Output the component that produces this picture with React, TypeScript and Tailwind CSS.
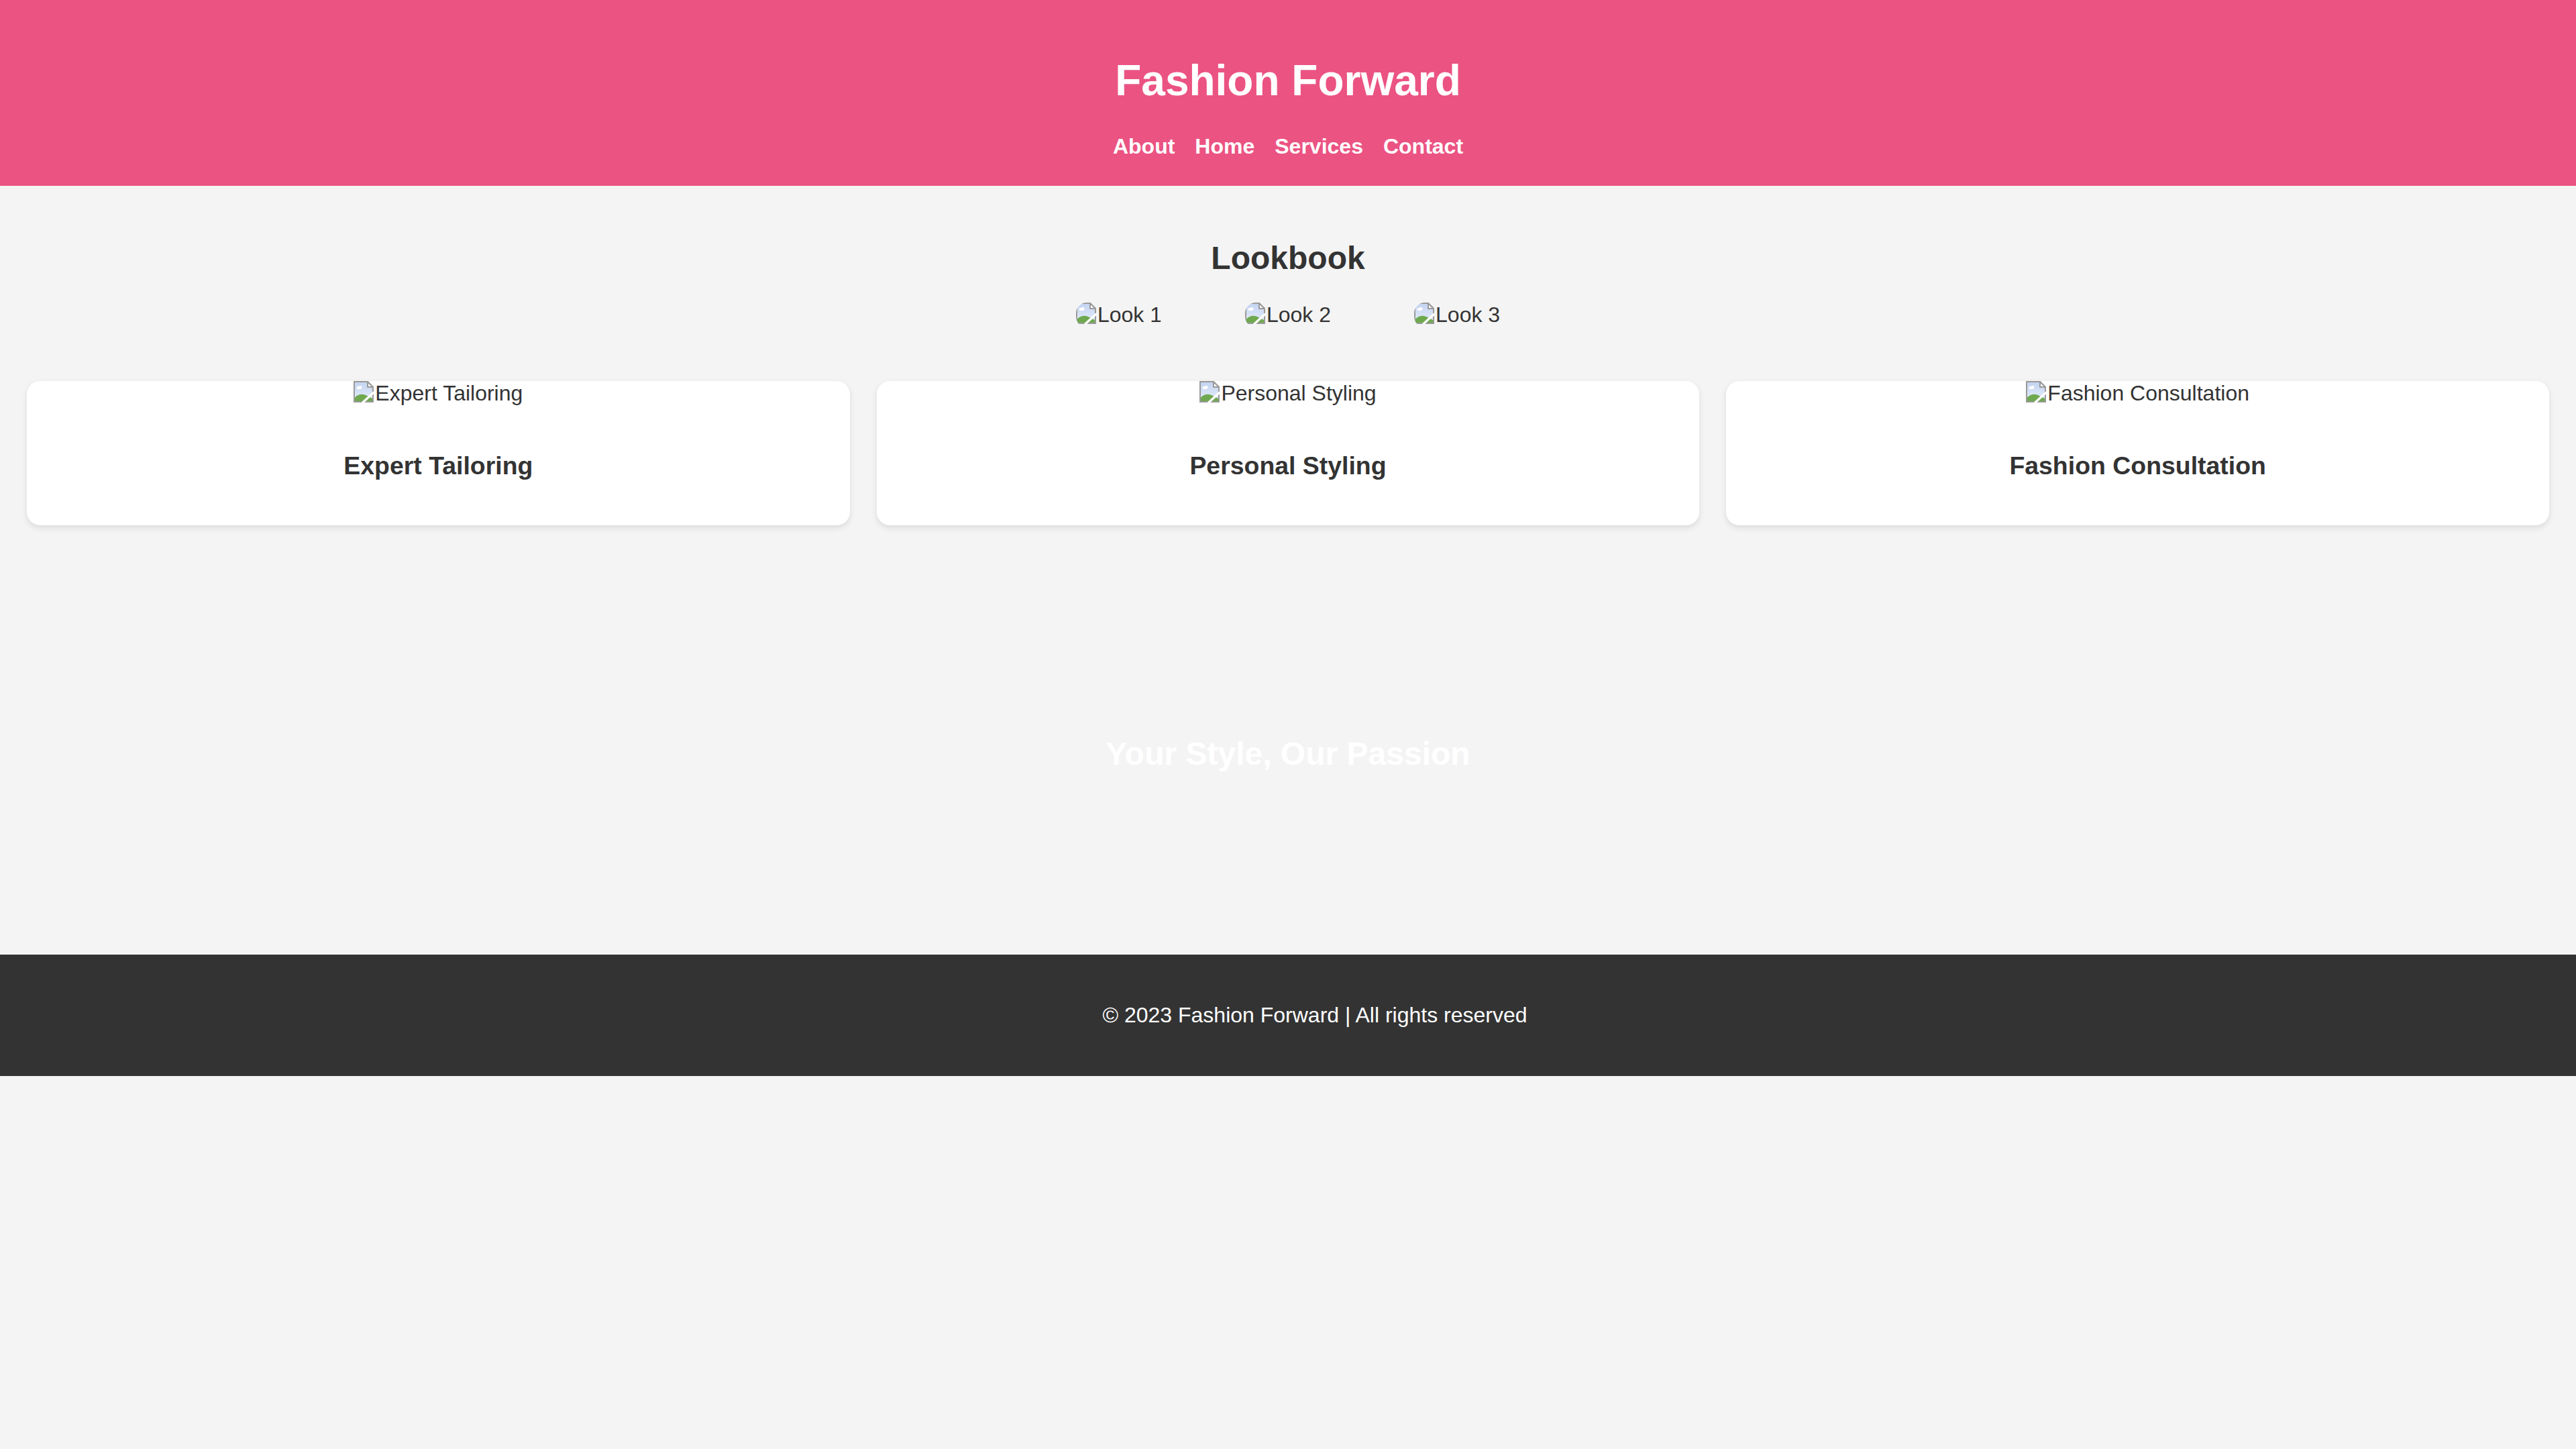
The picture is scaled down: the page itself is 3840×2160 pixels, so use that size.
import React from 'react'

const navLinks = ['About', 'Home', 'Services', 'Contact']
const looks = ['Look 1', 'Look 2', 'Look 3']
const services = ['Expert Tailoring', 'Personal Styling', 'Fashion Consultation']

// the browser's "missing picture" glyph, drawn at 32px
function BrokenIcon() {
  return (
    <svg viewBox="0 0 16 16" className="w-[32px] h-[32px] shrink-0">
      <defs>
        <linearGradient id="sky" x1="0" y1="0" x2="0" y2="1">
          <stop offset="0" stopColor="#c3d3f0" />
          <stop offset="1" stopColor="#e6eefb" />
        </linearGradient>
      </defs>
      <path d="M0.5 0.5 H10.5 L14.5 4.5 V15.5 H0.5 Z" fill="url(#sky)" stroke="#9a9a9a" strokeWidth="1" />
      <path d="M10.5 0.5 V4.5 H14.5 Z" fill="#fafafa" stroke="#9a9a9a" strokeWidth="1" strokeLinejoin="round" />
      <ellipse cx="4.2" cy="5" rx="1.9" ry="1.1" fill="#ffffff" />
      <ellipse cx="5.2" cy="4.4" rx="1.1" ry="0.9" fill="#ffffff" />
      <path d="M1 15 V12.2 Q5.5 7.8 11.5 11.8 L14 13 V15 Z" fill="#6fa94f" />
      <path d="M6.6 16.2 L15.2 8.4" stroke="#ffffff" strokeWidth="1.7" />
    </svg>
  )
}

function BrokenImg({ alt, rounded }: { alt: string; rounded?: boolean }) {
  return (
    <span className={rounded ? 'inline-flex items-start overflow-hidden rounded-[16px]' : 'inline-flex items-start'}>
      <BrokenIcon />
      <span>{alt}</span>
    </span>
  )
}

export default function App() {
  return (
    <div className="min-h-screen bg-[#f4f4f4] text-[#333] font-['Liberation_Sans',Arial,sans-serif] text-[32px] leading-[normal]">
      <header className="bg-[#eb5383] text-white text-center p-[40px]">
        <h1 className="text-[64px] font-bold my-[42.88px]">Fashion Forward</h1>
        <nav className="flex justify-center gap-[30px] font-bold">
          {navLinks.map((link) => (
            <a key={link} href="#" className="text-white">
              {link}
            </a>
          ))}
        </nav>
      </header>

      <section className="p-[40px] text-center">
        <h2 className="text-[48px] font-bold my-[39.84px]">Lookbook</h2>
        <div className="flex justify-center gap-[124px]">
          {looks.map((look) => (
            <BrokenImg key={look} alt={look} rounded />
          ))}
        </div>
      </section>

      <section className="grid grid-cols-3 gap-[40px] p-[40px]">
        {services.map((s) => (
          <div
            key={s}
            className="bg-white rounded-[20px] overflow-hidden text-center shadow-[0_4px_10px_rgba(0,0,0,0.1)]"
          >
            <div className="flex justify-center">
              <BrokenImg alt={s} />
            </div>
            <div className="p-[30px]">
              <h3 className="text-[37.44px] font-bold my-[37.44px]">{s}</h3>
            </div>
          </div>
        ))}
      </section>

      <section className="h-[600px] flex items-center justify-center text-center">
        <h2 className="text-[48px] font-bold text-white">Your Style, Our Passion</h2>
      </section>

      {/* text sits a little right of centre, as in the original */}
      <footer className="bg-[#333] text-white text-center py-[40px] pl-[80px]">
        <p className="my-[32px]">© 2023 Fashion Forward | All rights reserved</p>
      </footer>
    </div>
  )
}
